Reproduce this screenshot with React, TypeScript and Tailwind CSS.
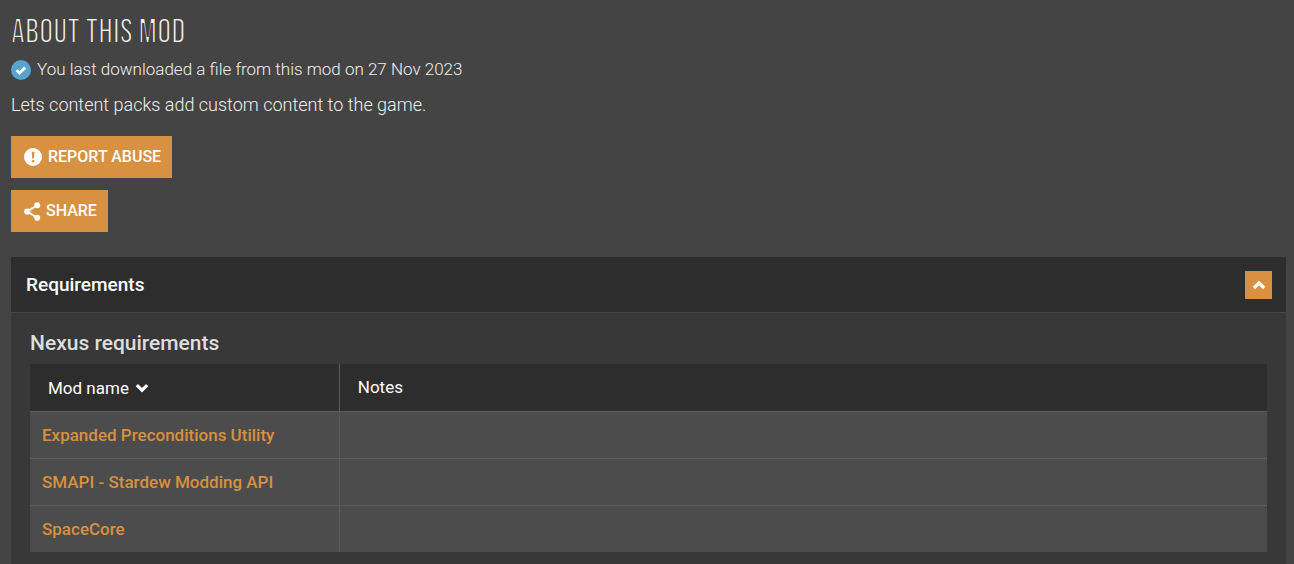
import React, { useState } from "react";

const requirements = [
  "Expanded Preconditions Utility",
  "SMAPI - Stardew Modding API",
  "SpaceCore",
];

function TickIcon() {
  return (
    <svg viewBox="0 0 20 20" className="size-5 shrink-0" aria-hidden="true">
      <circle cx="10" cy="10" r="10" fill="#57a5cc" />
      <path d="M5.6 10.2 8.6 13 14.2 7.4" fill="none" stroke="#fff" strokeWidth="2.8" />
    </svg>
  );
}

function AlertIcon() {
  return (
    <svg viewBox="0 0 18 18" className="size-[18px] shrink-0" aria-hidden="true">
      <circle cx="9" cy="9" r="9" fill="#fff" />
      <path d="M7.7 3.8h2.8l-.5 6.8H8.2z" fill="#d89140" />
      <circle cx="9.1" cy="13.2" r="1.3" fill="#d89140" />
    </svg>
  );
}

function ShareIcon() {
  return (
    <svg viewBox="0 0 17 19" className="h-[19px] w-[17px] shrink-0" aria-hidden="true">
      <path d="M13 3.3 3.2 9.5 13 15.7" fill="none" stroke="#fff" strokeWidth="2" />
      <circle cx="13.2" cy="3.3" r="3" fill="#fff" />
      <circle cx="3.2" cy="9.5" r="3.1" fill="#fff" />
      <circle cx="13.2" cy="15.7" r="3" fill="#fff" />
    </svg>
  );
}

function Chevron({ up = false }: { up?: boolean }) {
  return (
    <svg viewBox="0 0 14 10" className="h-[10px] w-[14px] shrink-0" aria-hidden="true">
      <path
        d={up ? "M1.8 8 7 3 12.2 8" : "M1.8 2.2 7 7.2 12.2 2.2"}
        fill="none"
        stroke="#fff"
        strokeWidth="3.2"
      />
    </svg>
  );
}

export default function App() {
  const [open, setOpen] = useState(true);
  return (
    <main className="flex min-h-screen flex-col bg-[#444444] pt-[13px] pr-2 pl-[11px] font-[Roboto,sans-serif] text-[#f0f0f0]">
      <h1 className="h-10 font-['Bebas_Neue','Roboto_Condensed',Roboto,sans-serif] text-[35px] leading-10 font-thin whitespace-nowrap text-[#f0f0f0] uppercase [-webkit-text-stroke:2px_#444444]">
        About this mod
      </h1>
      <p className="mt-[3px] flex h-7 items-center gap-1.5 text-[17px] font-light">
        <TickIcon />
        You last downloaded a file from this mod on 27 Nov 2023
      </p>
      <p className="mt-[9px] text-lg leading-6 font-light">
        Lets content packs add custom content to the game.
      </p>
      <div className="mt-[19px] flex flex-col items-start gap-3">
        <button className="flex h-[42px] items-center gap-1.5 bg-[#d89140] pr-[11px] pl-[13px] text-base font-medium text-white uppercase">
          <AlertIcon />
          Report abuse
        </button>
        <button className="flex h-[42px] items-center gap-[5px] bg-[#d89140] pr-[11px] pl-[13px] text-base font-medium text-white uppercase">
          <ShareIcon />
          Share
        </button>
      </div>

      <section className="mt-[25px] flex grow flex-col bg-[#383838]">
        <header className="flex h-14 items-center justify-between border-b border-[#484848] bg-[#2d2d2d] pr-[14px] pl-[15px]">
          <h2 className="text-[19px] leading-7 font-medium text-white">Requirements</h2>
          <button
            aria-label="Toggle requirements"
            aria-expanded={open}
            onClick={() => setOpen(!open)}
            className="flex h-7 w-[27px] items-center justify-center bg-[#d89140]"
          >
            <Chevron up={open} />
          </button>
        </header>
        {open && (
          <div className="px-[19px] pt-4 pb-[11px]">
            <h3 className="text-[21px] leading-7 font-medium text-[#dedede]">Nexus requirements</h3>
            <table className="mt-[7px] w-full table-fixed border-collapse text-left text-[17px] leading-6">
              <thead className="bg-[#2d2d2d] text-white">
                <tr className="h-[47px]">
                  <th scope="col" className="w-1/4 border-r border-[#5c5c5c] pt-0.5 pl-[18px] font-normal">
                    <button className="flex items-center gap-1.5">
                      Mod name
                      <Chevron />
                    </button>
                  </th>
                  <th scope="col" className="pl-[18px] font-normal">
                    Notes
                  </th>
                </tr>
              </thead>
              <tbody className="bg-[#4c4c4c]">
                {requirements.map((name) => (
                  <tr key={name} className="h-[47px] border-t border-[#5c5c5c]">
                    <td className="border-r border-[#5c5c5c] pl-3">
                      <a href="#" className="font-medium text-[#d89140]">
                        {name}
                      </a>
                    </td>
                    <td />
                  </tr>
                ))}
              </tbody>
            </table>
          </div>
        )}
      </section>
    </main>
  );
}
